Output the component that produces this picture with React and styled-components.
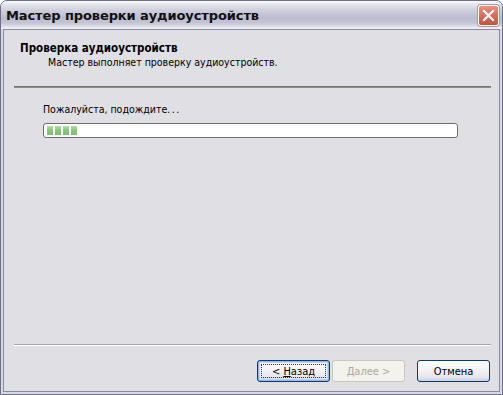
import React from "react";
import styled, { createGlobalStyle } from "styled-components";

const GlobalStyle = createGlobalStyle`
  html, body {
    margin: 0;
    padding: 0;
    background: #ffffff;
  }
  body {
    font-family: "DejaVu Sans Condensed", "Liberation Sans", sans-serif;
    font-size: 11px;
  }
`;

const UI_FONT = `"DejaVu Sans Condensed", "Liberation Sans", sans-serif`;

const Window = styled.div`
  width: 503px;
  height: 395px;
  box-sizing: border-box;
  display: flex;
  flex-direction: column;
  border: 1px solid #6e6e8a;
  border-radius: 7px 7px 0 0;
  background: #d4d4e0;
  overflow: hidden;
`;

const TitleBar = styled.div`
  height: 28px;
  flex-shrink: 0;
  display: flex;
  align-items: center;
  justify-content: space-between;
  padding: 0 3px 0 5px;
  background: linear-gradient(
    to bottom,
    #fbfbfd 0%,
    #e6e6ee 12%,
    #cdcddc 35%,
    #bdbdd0 60%,
    #c4c4d5 78%,
    #e2e2ea 92%,
    #f4f4f8 100%
  );
`;

const Title = styled.span`
  font-family: "DejaVu Sans", "Liberation Sans", sans-serif;
  font-weight: bold;
  font-size: 13px;
  color: #111111;
  letter-spacing: -0.1px;
`;

const CloseButton = styled.div`
  width: 21px;
  height: 21px;
  box-sizing: border-box;
  border: 1px solid #ffffff;
  border-radius: 3px;
  background: linear-gradient(to bottom, #ec8f82 0%, #dc6a5c 50%, #c9503f 100%);
  box-shadow: 0 0 0 1px #b29aa4;
  display: flex;
  align-items: center;
  justify-content: center;
`;

const Frame = styled.div`
  flex: 1;
  display: flex;
  padding: 0 2px 2px 2px;
  background: #d8d8e4;
`;

const Client = styled.div`
  flex: 1;
  display: flex;
  flex-direction: column;
  border: 1px solid #8a8aa6;
  background: #e0dfe3;
  color: #000000;
  font-family: ${UI_FONT};
`;

const Header = styled.div`
  height: 56px;
  box-sizing: border-box;
  padding: 11px 0 0 16px;
`;

const HeaderTitle = styled.div`
  font-weight: bold;
  font-size: 11.5px;
  line-height: 14px;
`;

const HeaderSub = styled.div`
  font-size: 10.5px;
  line-height: 15px;
  padding-left: 28px;
`;

const Rule = styled.div`
  height: 1px;
  margin: 0 ${(p) => p.$right}px 0 ${(p) => p.$left}px;
  background: ${(p) => p.$color};
  border-bottom: 1px solid ${(p) => p.$under};
`;

const Content = styled.div`
  flex: 1;
  padding: 14px 0 0 39px;
`;

const WaitText = styled.div`
  font-size: 10.5px;
  line-height: 14px;
`;

const Dots = styled.span`
  letter-spacing: 1.5px;
`;

const Progress = styled.div`
  margin-top: 7px;
  width: 415px;
  height: 15px;
  box-sizing: border-box;
  border: 1px solid #6e6e6e;
  border-radius: 3px;
  background: #ffffff;
  display: flex;
  align-items: center;
  gap: 2px;
  padding: 0 3px;
`;

const Chunk = styled.div`
  width: 6px;
  height: 9px;
  background: linear-gradient(to bottom, #b5dea9 0%, #8cc97b 45%, #7dbf6c 100%);
`;

const ButtonRow = styled.div`
  height: 45px;
  box-sizing: border-box;
  display: flex;
  align-items: flex-start;
  justify-content: flex-end;
  padding: 14px 9px 0 0;
`;

const Button = styled.div`
  width: 73px;
  height: 22px;
  box-sizing: border-box;
  margin-left: ${(p) => p.$gap}px;
  border: 1px solid ${(p) => (p.$disabled ? "#c9c7ba" : "#003c74")};
  border-radius: 3px;
  background: ${(p) =>
    p.$disabled
      ? "#f3f2ec"
      : "linear-gradient(to bottom, #ffffff 0%, #f4f4f8 40%, #e6e6ee 80%, #cfcfdc 100%)"};
  box-shadow: ${(p) =>
    p.$focus ? "inset 0 0 0 1px #98b8ea, inset 0 0 0 2px #c2d4f3" : "none"};
  color: ${(p) => (p.$disabled ? "#aca899" : "#000000")};
  font-size: 11px;
  white-space: pre;
  display: flex;
  align-items: center;
  justify-content: center;
  position: relative;
`;

const FocusRing = styled.div`
  position: absolute;
  inset: 3px;
  border: 1px dotted #333333;
`;

const U = styled.span`
  text-decoration: underline;
`;

export default function App() {
  return (
    <>
      <GlobalStyle />
      <Window>
        <TitleBar>
          <Title>Мастер проверки аудиоустройств</Title>
          <CloseButton>
            <svg width="13" height="13" viewBox="0 0 13 13">
              <path d="M2 2 L11 11 M11 2 L2 11" stroke="#ffffff" strokeWidth="2.2" strokeLinecap="square" />
            </svg>
          </CloseButton>
        </TitleBar>
        <Frame>
          <Client>
            <Header>
              <HeaderTitle>Проверка аудиоустройств</HeaderTitle>
              <HeaderSub>Мастер выполняет проверку аудиоустройств.</HeaderSub>
            </Header>
            <Rule $left={10} $right={8} $color="#75756d" $under="#8d8d88" />
            <Content>
              <WaitText>
                Пожалуйста, подождите<Dots>...</Dots>
              </WaitText>
              <Progress>
                {[0, 1, 2, 3].map((i) => (
                  <Chunk key={i} />
                ))}
              </Progress>
            </Content>
            <Rule $left={10} $right={8} $color="#a6a5ab" $under="#ffffff" />
            <ButtonRow>
              <Button $focus $gap={0}>
                <FocusRing />
                {"< "}
                <U>Н</U>азад
              </Button>
              <Button $disabled $gap={2}>
                <U>Д</U>
                {"алее >"}
              </Button>
              <Button $gap={12}>Отмена</Button>
            </ButtonRow>
          </Client>
        </Frame>
      </Window>
    </>
  );
}
